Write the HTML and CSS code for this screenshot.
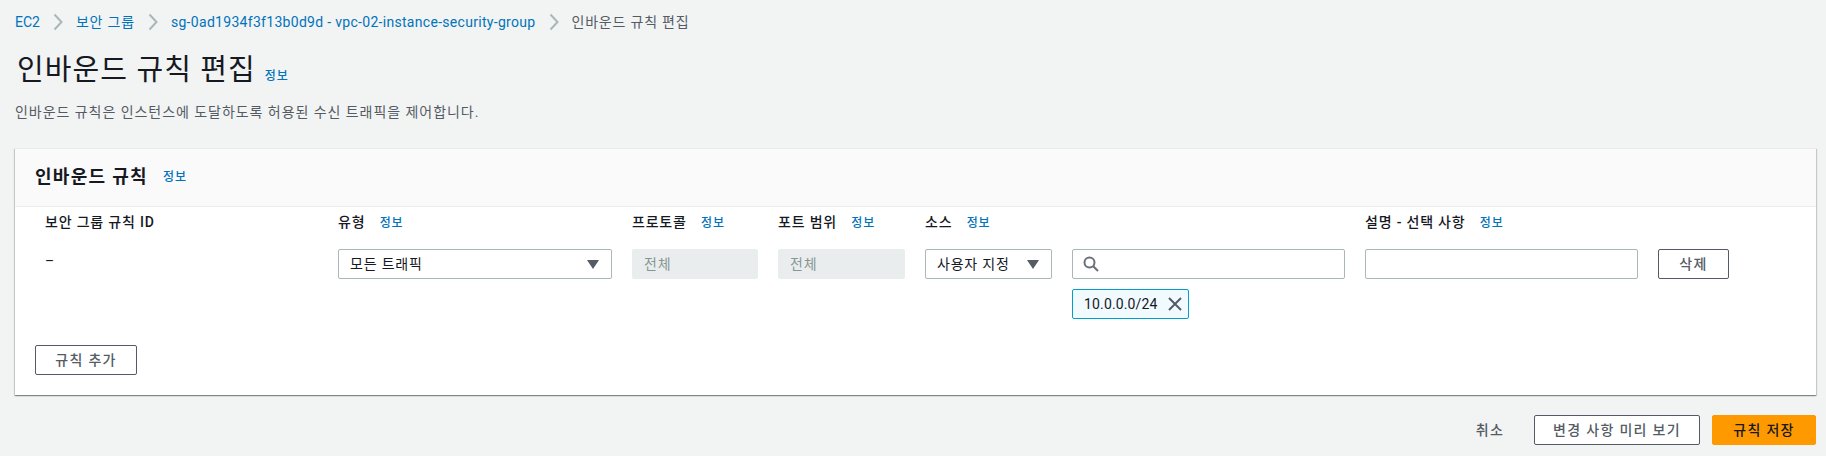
FILE: index.html
```html
<!DOCTYPE html>
<html lang="ko">
<head>
    <meta charset="UTF-8">
    <title>인바운드 규칙 편집</title>
    <link rel="stylesheet" href="styles.css">
</head>
<body>
    <nav class="crumbs">
        <a class="link crumb-first" href="#">EC2</a>
        <svg class="chev" viewBox="0 0 10 18"><path d="M1.5 1.5 8.5 9 1.5 16.5"/></svg>
        <a class="link" href="#">보안 그룹</a>
        <svg class="chev" viewBox="0 0 10 18"><path d="M1.5 1.5 8.5 9 1.5 16.5"/></svg>
        <a class="link crumb-long" href="#">sg-0ad1934f3f13b0d9d - vpc-02-instance-security-group</a>
        <svg class="chev" viewBox="0 0 10 18"><path d="M1.5 1.5 8.5 9 1.5 16.5"/></svg>
        <span class="crumb-now">인바운드 규칙 편집</span>
    </nav>

    <header class="page-head">
        <h1>인바운드 규칙 편집</h1>
        <a class="info" href="#">정보</a>
    </header>
    <p class="page-desc">인바운드 규칙은 인스턴스에 도달하도록 허용된 수신 트래픽을 제어합니다.</p>

    <section class="card">
        <div class="card-head">
            <h2>인바운드 규칙</h2>
            <a class="info" href="#">정보</a>
        </div>
        <div class="card-body">
            <div class="rules">
                <div class="col-label">보안 그룹 규칙 ID</div>
                <div class="col-label">유형 <a class="info" href="#">정보</a></div>
                <div class="col-label">프로토콜 <a class="info" href="#">정보</a></div>
                <div class="col-label">포트 범위 <a class="info" href="#">정보</a></div>
                <div class="col-label">소스 <a class="info" href="#">정보</a></div>
                <div></div>
                <div class="col-label">설명 - 선택 사항 <a class="info" href="#">정보</a></div>
                <div></div>

                <div class="rule-id">–</div>
                <div class="field select">모든 트래픽<span class="caret"></span></div>
                <div class="field disabled">전체</div>
                <div class="field disabled">전체</div>
                <div class="field select">사용자 지정<span class="caret"></span></div>
                <div class="source">
                    <div class="field search">
                        <svg class="search-icon" viewBox="0 0 16 16"><circle cx="6.5" cy="6.5" r="5"/><path d="M10.2 10.2 15 15"/></svg>
                    </div>
                    <div class="token">10.0.0.0/24
                        <svg class="token-x" viewBox="0 0 16 16"><path d="M2 2 14 14M14 2 2 14"/></svg>
                    </div>
                </div>
                <input class="field" type="text">
                <button class="btn">삭제</button>
            </div>
            <button class="btn add-btn">규칙 추가</button>
        </div>
    </section>

    <footer class="actions">
        <a class="cancel" href="#">취소</a>
        <button class="btn preview-btn">변경 사항 미리 보기</button>
        <button class="btn save-btn">규칙 저장</button>
    </footer>
</body>
</html>
```
FILE: styles.css
```css
* {
    margin: 0;
    padding: 0;
    box-sizing: border-box;
}
body {
    background: #f2f3f3;
    color: #16191f;
    font-family: "Roboto", "Noto Sans CJK KR", sans-serif;
    font-size: 14px;
    line-height: 20px;
    letter-spacing: 0.8px;
    padding: 12px 10px 0 15px;
}
a {
    text-decoration: none;
}
.link {
    color: #0073bb;
}
.crumb-first {
    letter-spacing: 0;
}
.crumb-long {
    letter-spacing: 0.3px;
}
.crumbs {
    display: flex;
    align-items: center;
    height: 20px;
}
.chev {
    width: 10px;
    height: 18px;
    margin: 0 13px;
    fill: none;
    stroke: #aab7b8;
    stroke-width: 2;
}
.crumb-now {
    color: #545b64;
}
.page-head {
    display: flex;
    align-items: flex-end;
    margin-top: 20px;
    height: 36px;
    padding-left: 2px;
}
h1 {
    font-size: 29px;
    line-height: 36px;
    font-weight: 400;
    letter-spacing: 1.1px;
}
.info {
    color: #0073bb;
    font-size: 12px;
    font-weight: 500;
    letter-spacing: 0.9px;
    margin-left: 10px;
}
.page-head .info {
    margin-left: 9px;
    margin-bottom: 2px;
}
.page-desc {
    color: #545b64;
    letter-spacing: 0.95px;
    margin-top: 14px;
}
.card {
    background: #fff;
    margin-top: 26px;
    border-top: 1px solid #eaeded;
    box-shadow: 0 1px 1px 0 rgba(0, 28, 36, 0.3), 1px 1px 1px 0 rgba(0, 28, 36, 0.15), -1px 1px 1px 0 rgba(0, 28, 36, 0.15);
}
.card-head {
    display: flex;
    align-items: center;
    height: 58px;
    padding: 0 0 2px 20px;
    background: #fafafa;
    border-bottom: 1px solid #eaeded;
}
h2 {
    font-size: 18px;
    line-height: 22px;
    font-weight: 700;
    letter-spacing: 1.3px;
}
.card-head .info {
    margin-left: 15px;
}
.card-body {
    padding: 4px 20px 20px;
}
.rules {
    display: grid;
    grid-template-columns: 283px 274px 126px 127px 127px 273px 273px 71px;
    column-gap: 20px;
    row-gap: 12px;
    align-items: start;
}
.col-label {
    font-weight: 500;
    line-height: 22px;
    height: 26px;
}
.col-label:first-child {
    padding-left: 10px;
}
.rule-id {
    padding: 2px 0 0 10px;
}
.field {
    display: flex;
    align-items: center;
    height: 30px;
    padding: 0 11px;
    width: 100%;
    background: #fff;
    border: 1px solid #aab7b8;
    border-radius: 2px;
    font: inherit;
}
.select {
    justify-content: space-between;
    padding-right: 12px;
}
.caret {
    width: 0;
    height: 0;
    border-left: 6px solid transparent;
    border-right: 6px solid transparent;
    border-top: 9px solid #545b64;
}
.disabled {
    background: #eaeded;
    border-color: #eaeded;
    color: #879596;
}
.search {
    padding-left: 10px;
}
.search-icon {
    width: 16px;
    height: 16px;
    fill: none;
    stroke: #687078;
    stroke-width: 2;
}
.token {
    display: inline-flex;
    align-items: center;
    gap: 9px;
    height: 30px;
    margin-top: 10px;
    padding: 0 5px 0 11px;
    background: #f1faff;
    border: 1px solid #00a1c9;
    border-radius: 2px;
    letter-spacing: 0.15px;
}
.token-x {
    width: 16px;
    height: 16px;
    fill: none;
    stroke: #545b64;
    stroke-width: 2;
}
.btn {
    height: 30px;
    background: #fff;
    border: 1px solid #545b64;
    border-radius: 2px;
    color: #545b64;
    font: inherit;
    font-weight: 500;
    letter-spacing: 1.3px;
}
.add-btn {
    width: 102px;
    margin-top: 26px;
}
.actions {
    display: flex;
    align-items: center;
    justify-content: flex-end;
    margin-top: 20px;
}
.cancel {
    color: #545b64;
    font-weight: 500;
    letter-spacing: 1.2px;
    margin-right: 30px;
}
.preview-btn {
    width: 166px;
    margin-right: 12px;
}
.save-btn {
    width: 104px;
    background: #f90;
    border-color: #f90;
    color: #16191f;
}
```
